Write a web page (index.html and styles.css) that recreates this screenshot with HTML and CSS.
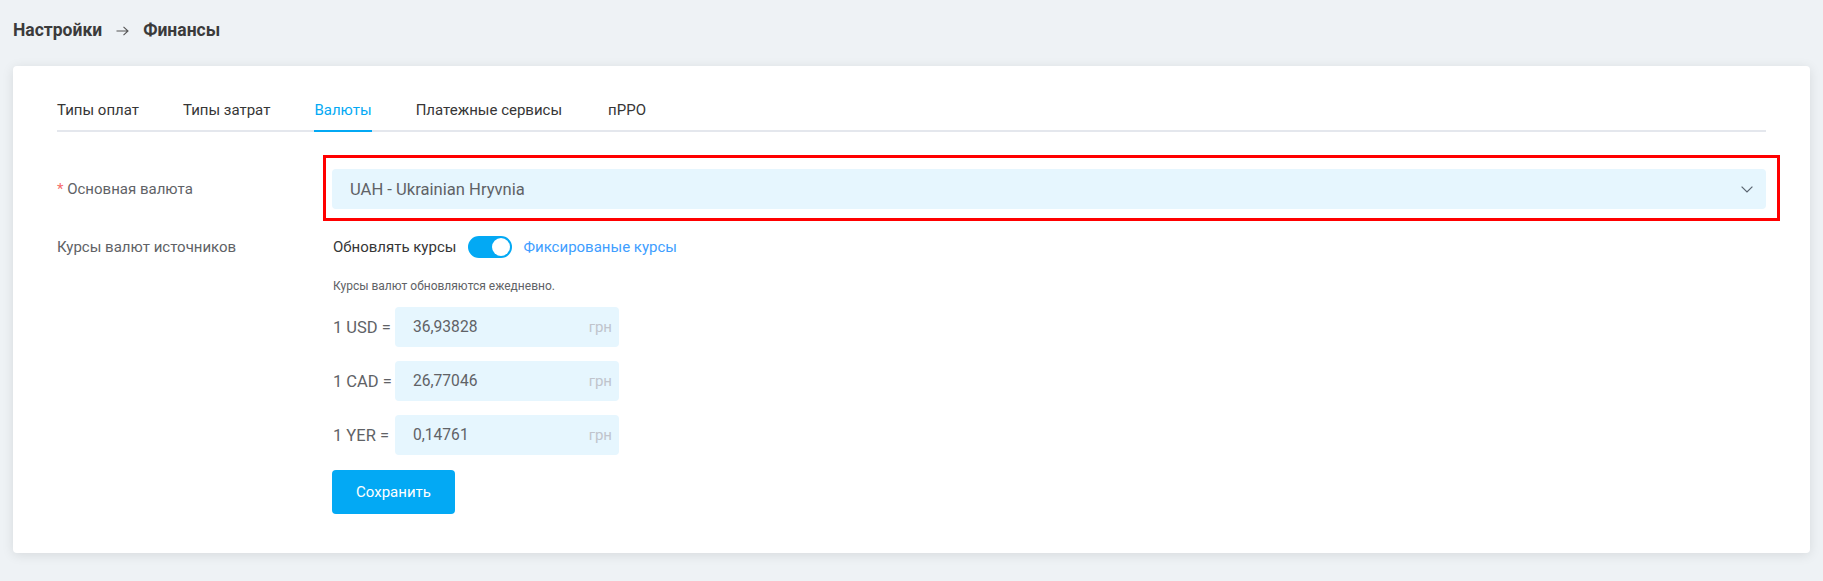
FILE: index.html
```html
<!DOCTYPE html>
<html lang="ru">
<head>
<meta charset="utf-8">
<title>Настройки — Финансы</title>
<link rel="stylesheet" href="styles.css">
</head>
<body>
<header class="crumbs">
  <span class="crumb">Настройки</span>
  <svg class="crumb-arrow" width="13" height="10" viewBox="0 0 13 10"><path d="M0.5 5H12M7.5 0.8L12 5L7.5 9.2" fill="none" stroke="#555" stroke-width="1.1"/></svg>
  <span class="crumb">Финансы</span>
</header>
<main class="card">
  <nav class="tabs">
    <a class="tab">Типы оплат</a>
    <a class="tab">Типы затрат</a>
    <a class="tab tab-active">Валюты</a>
    <a class="tab">Платежные сервисы</a>
    <a class="tab">пРРО</a>
  </nav>
  <form class="form">
    <div class="row row-main">
      <label class="label"><span class="req">*</span> Основная валюта</label>
      <div class="control">
        <div class="select-wrap">
          <div class="select">
            <span class="select-value">UAH - Ukrainian Hryvnia</span>
            <svg class="chevron" width="12" height="7" viewBox="0 0 12 7"><path d="M0.6 0.6L6 6L11.4 0.6" fill="none" stroke="#5a6470" stroke-width="1.2"/></svg>
          </div>
          <div class="highlight"></div>
        </div>
      </div>
    </div>
    <div class="row">
      <label class="label label-top">Курсы валют источников</label>
      <div class="control">
        <div class="switch-line">
          <span class="switch-off">Обновлять курсы</span>
          <span class="switch"><span class="knob"></span></span>
          <span class="switch-on">Фиксированые курсы</span>
        </div>
        <p class="hint">Курсы валют обновляются ежедневно.</p>
        <div class="rates">
          <div class="rate"><span class="rate-label">1 USD =</span><div class="rate-input"><span class="val">36,93828</span><span class="suffix">грн</span></div></div>
          <div class="rate"><span class="rate-label">1 CAD =</span><div class="rate-input"><span class="val">26,77046</span><span class="suffix">грн</span></div></div>
          <div class="rate"><span class="rate-label">1 YER =</span><div class="rate-input"><span class="val">0,14761</span><span class="suffix">грн</span></div></div>
        </div>
        <button class="btn" type="button">Сохранить</button>
      </div>
    </div>
  </form>
</main>
</body>
</html>
```
FILE: styles.css
```css
* { box-sizing: border-box; }
html, body { margin: 0; padding: 0; }
body {
  background: #eef2f5;
  font-family: Roboto, "Liberation Sans", Arial, sans-serif;
  font-size: 15px;
  color: #303133;
  height: 581px;
  overflow: hidden;
}
.crumbs {
  height: 66px;
  padding: 17px 13px 0;
  display: flex;
  align-items: flex-start;
}
.crumb {
  font-weight: 700;
  font-size: 17.5px;
  color: #3b3b3b;
  line-height: 26px;
}
.crumb-arrow { margin: 9px 14px 0; }
.card {
  margin: 0 13px;
  background: #fff;
  border-radius: 4px;
  box-shadow: 0 2px 12px rgba(0, 0, 0, 0.1);
  padding: 24px 44px 39px;
}
.tabs {
  display: flex;
  gap: 44px;
  border-bottom: 2px solid #e4e7ed;
}
.tab {
  height: 42px;
  line-height: 40px;
  margin-bottom: -2px;
  border-bottom: 2px solid transparent;
  color: #363636;
  font-size: 15px;
}
.tab:nth-child(5) { margin-left: 2px; }
.tab-active {
  color: #03a9f4;
  border-bottom-color: #03a9f4;
}
.form { margin-top: 37px; }
.row { display: flex; }
.row + .row { margin-top: 22px; }
.label {
  width: 276px;
  flex: none;
  color: #606266;
  line-height: 40px;
}
.label-top { line-height: 32px; }
.req { color: #f56c6c; }
.control { flex: 1; min-width: 0; }
.select-wrap { position: relative; }
.select {
  height: 40px;
  background: #e6f6fe;
  border-radius: 4px;
  padding: 0 13px 0 18px;
  margin-left: -1px;
  display: flex;
  align-items: center;
  justify-content: space-between;
  color: #606266;
}
.select-value { font-size: 16.6px; }
.chevron { display: block; }
.highlight {
  position: absolute;
  top: -14px;
  bottom: -12px;
  left: -10px;
  right: -14px;
  border: 3px solid #ff0000;
  pointer-events: none;
}
.switch-line {
  height: 32px;
  display: flex;
  align-items: center;
}
.switch-off { color: #363636; }
.switch {
  position: relative;
  width: 44px;
  height: 22px;
  border-radius: 11px;
  background: #03a9f4;
  margin: 0 11px 0 12px;
}
.knob {
  position: absolute;
  top: 2px;
  right: 2px;
  width: 18px;
  height: 18px;
  border-radius: 50%;
  background: #fff;
}
.switch-on { color: #409eff; }
.hint {
  margin: 14px 0 0;
  font-size: 12px;
  line-height: 18px;
  color: #606266;
}
.rates {
  margin-top: 12px;
  display: flex;
  flex-direction: column;
  gap: 14px;
}
.rate {
  display: flex;
  align-items: center;
  gap: 3px;
  color: #606266;
}
.rate-label { font-size: 16.5px; width: 59px; flex: none; white-space: nowrap; }
.rate-input {
  width: 224px;
  height: 40px;
  background: #e6f6fe;
  border-radius: 4px;
  padding: 0 7px 0 18px;
  display: flex;
  align-items: center;
  justify-content: space-between;
}
.val { color: #606266; font-size: 15.6px; }
.suffix { color: #c0c4cc; font-size: 15px; }
.btn {
  margin-top: 15px;
  margin-left: -1px;
  width: 123px;
  height: 44px;
  border: none;
  border-radius: 4px;
  background: #03a9f4;
  color: #fff;
  font-family: inherit;
  font-size: 15px;
  padding: 0;
}
```
